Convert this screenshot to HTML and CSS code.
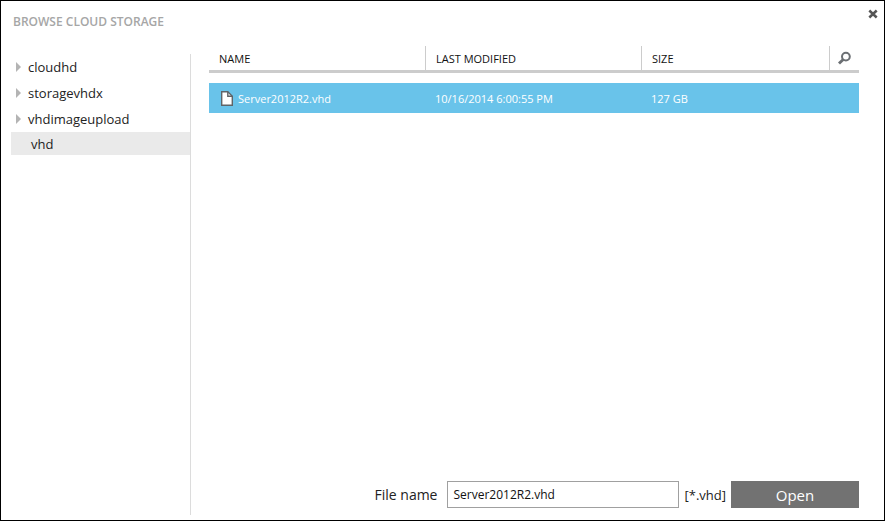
FILE: index.html
```html
<!DOCTYPE html>
<html lang="en">
<head>
  <meta charset="UTF-8" />
  <meta name="viewport" content="width=device-width, initial-scale=1.0" />
  <title>Browse Cloud Storage</title>
  <link rel="stylesheet" href="styles.css">
</head>
<body>
  <div class="dialog" role="dialog" aria-labelledby="dialog-title">
    <header class="dialog-header">
      <h1 id="dialog-title">BROWSE CLOUD STORAGE</h1>
      <button type="button" class="btn-close" aria-label="Close">
        <svg width="10" height="10" viewBox="0 0 10 10"><path d="M1.3 1.5l7.4 7M8.7 1.5l-7.4 7" stroke="#555" stroke-width="2.5" fill="none" /></svg>
      </button>
    </header>

    <div class="dialog-body">
      <nav class="sidebar">
        <ul class="tree">
          <li><a href="#cloudhd"><span class="arrow"></span>cloudhd</a></li>
          <li><a href="#storagevhdx"><span class="arrow"></span>storagevhdx</a></li>
          <li>
            <a href="#vhdimageupload"><span class="arrow"></span>vhdimageupload</a>
            <ul>
              <li><a href="#vhd" class="selected">vhd</a></li>
            </ul>
          </li>
        </ul>
      </nav>

      <main>
        <table class="files">
          <thead>
            <tr>
              <th class="col-name">NAME</th>
              <th class="col-date">LAST MODIFIED</th>
              <th class="col-size">SIZE</th>
              <th class="col-search">
                <button type="button" class="btn-search" aria-label="Search">
                  <svg width="14" height="14" viewBox="0 0 14 14" fill="none" stroke="#6b6f73"><circle cx="7.9" cy="5.6" r="3.9" stroke-width="2" /><path d="M5.2 8.4L1 12.6" stroke-width="2.8" /></svg>
                </button>
              </th>
            </tr>
          </thead>
          <tbody>
            <tr>
              <td>
                <div class="file">
                  <svg width="12" height="15" viewBox="0 0 12 15" stroke="#5f6468" stroke-width="1.4"><path d="M.7.7h6.1l4.5 4.5v9.1H.7z" fill="#fff" /><path d="M6.8.7v4.5h4.5" fill="none" /></svg>
                  <span>Server2012R2.vhd</span>
                </div>
              </td>
              <td>10/16/2014 6:00:55 PM</td>
              <td>127 GB</td>
              <td></td>
            </tr>
          </tbody>
        </table>

        <form class="open-form">
          <label for="file-name">File name</label>
          <input type="text" id="file-name" value="Server2012R2.vhd" />
          <span class="filter">[*.vhd]</span>
          <button type="button" class="btn-open">Open</button>
        </form>
      </main>
    </div>
  </div>
</body>
</html>
```

FILE: styles.css
```css
* {
  box-sizing: border-box;
}
body {
  margin: 0;
  font-family: "Segoe UI", "Open Sans", "Noto Sans", sans-serif;
  color: #222;
  background-color: white;
}
button {
  border: none;
  font-family: inherit;
  cursor: pointer;
}
.dialog {
  display: flex;
  flex-direction: column;
  min-height: 100vh;
  border: 1px solid #000;
}

/* Header */
.dialog-header {
  display: flex;
  justify-content: space-between;
  align-items: flex-start;
  height: 45px;
  padding: 8px 6px 0 12px;
}
h1 {
  margin: 4px 0 0;
  font-size: 12px;
  line-height: 18px;
  font-weight: 600;
  color: #a6a6a6;
}
.btn-close {
  display: flex;
  padding: 0;
  background: none;
}
.dialog-body {
  display: flex;
  flex: 1;
}

/* Folder tree */
.sidebar {
  width: 180px;
  margin: 8px 0 5px 10px;
  border-right: 1px solid #dcdcdc;
}
.tree, .tree ul {
  margin: 0;
  padding: 0;
  list-style: none;
}
.tree a {
  display: flex;
  align-items: center;
  height: 26px;
  padding-left: 5px;
  font-size: 13px;
  color: #222;
  text-decoration: none;
}
.tree .selected {
  height: 23px;
  padding-left: 20px;
  background-color: #eaeaea;
}
.arrow {
  margin-right: 7px;
  border-left: 5px solid #b4b4b4;
  border-top: 5px solid transparent;
  border-bottom: 5px solid transparent;
}

/* File list */
main {
  display: flex;
  flex-direction: column;
  justify-content: space-between;
  flex: 1;
  padding: 0 25px 12px 18px;
}
.files {
  width: 100%;
  table-layout: fixed;
  border-collapse: separate;
  border-spacing: 0;
  font-size: 11px;
}
th {
  height: 27px;
  padding: 0 10px;
  text-align: left;
  font-weight: 500;
  color: #111;
  border-bottom: 3px solid #ccc;
}
th + th {
  border-left: 1px solid #ccc;
}
.col-name, .col-date {
  width: 216px;
}
.col-search {
  width: 30px;
  padding: 0 8px;
}
.btn-search {
  display: flex;
  padding: 0;
  background: none;
}
tbody::before {
  content: "";
  display: table-row;
  height: 10px;
}
td {
  height: 30px;
  padding: 0 10px;
  color: white;
  background-color: #69c3ea;
}
.file {
  display: flex;
  align-items: center;
  gap: 5px;
  padding-left: 2px;
}

/* Open form */
.open-form {
  display: flex;
  justify-content: flex-end;
  align-items: center;
  font-size: 14px;
}
.open-form label {
  margin-right: 10px;
}
.open-form input {
  width: 232px;
  height: 27px;
  padding: 0 5px;
  border: 1px solid #a0a0a0;
  font-family: inherit;
  font-size: 12px;
  color: #111;
}
.filter {
  margin: 0 5px;
  font-size: 13px;
}
.btn-open {
  width: 128px;
  height: 27px;
  padding: 0;
  font-size: 15px;
  color: white;
  background-color: #727272;
}
```
